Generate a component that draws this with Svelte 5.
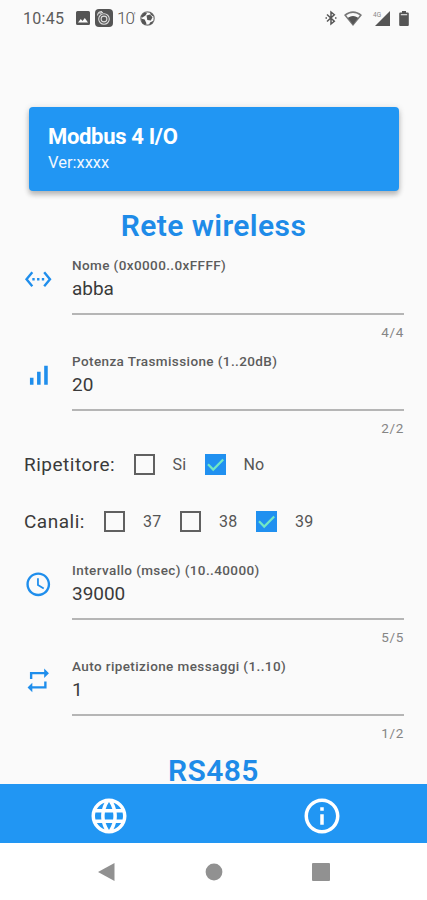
<script>
  const wireless = [
    { icon: 'ethernet', label: 'Nome (0x0000..0xFFFF)', value: 'abba', count: '4/4' },
    { icon: 'signal', label: 'Potenza Trasmissione (1..20dB)', value: '20', count: '2/2' }
  ];
  const timing = [
    { icon: 'clock', label: 'Intervallo (msec) (10..40000)', value: '39000', count: '5/5' },
    { icon: 'repeat', label: 'Auto ripetizione messaggi (1..10)', value: '1', count: '1/2' }
  ];
  const repeater = [
    { text: 'Si', on: false, w: 71 },
    { text: 'No', on: true, w: 71 }
  ];
  const channels = [
    { text: '37', on: false, w: 76 },
    { text: '38', on: false, w: 76 },
    { text: '39', on: true, w: 76 }
  ];
  const paths = {
    ethernet: 'M7.77 6.76 6.23 5.48.82 12l5.41 6.52 1.54-1.28L3.42 12l4.35-5.24zM7 13h2v-2H7v2zm10-2h-2v2h2v-2zm-6 2h2v-2h-2v2zm6.77-7.52-1.54 1.28L20.58 12l-4.35 5.24 1.54 1.28L23.18 12l-5.41-6.52z',
    signal: 'M17 4h3v16h-3zM5 14h3v6H5zm6-5h3v11h-3z',
    clock: 'M11.99 2C6.47 2 2 6.48 2 12s4.47 10 9.99 10C17.52 22 22 17.52 22 12S17.52 2 11.99 2zM12 20c-4.42 0-8-3.58-8-8s3.58-8 8-8 8 3.58 8 8-3.58 8-8 8zm.5-13H11v6l5.25 3.15.75-1.23-4.5-2.67z',
    repeat: 'M7 7h10v3l4-4-4-4v3H5v6h2V7zm10 10H7v-3l-4 4 4 4v-3h12v-6h-2v4z'
  };
</script>

{#snippet field(f)}
  <div class="field">
    <svg class="lead" viewBox="0 0 24 24"><path d={paths[f.icon]} /></svg>
    <div class="body">
      <div class="label">{f.label}</div>
      <div class="value">{f.value}</div>
      <div class="line"></div>
      <div class="count">{f.count}</div>
    </div>
  </div>
{/snippet}

{#snippet option(o)}
  <div class="option" style="width:{o.w}px">
    <span class="box" class:on={o.on}>
      {#if o.on}
        <svg viewBox="0 0 21 21"><path d="M3 10.3 8.2 15.6 18.2 5.4" /></svg>
      {/if}
    </span>
    <span class="otext">{o.text}</span>
  </div>
{/snippet}

<div class="screen">
  <header class="status">
    <span class="time">10:45</span>
    <svg class="s-img" viewBox="0 0 14 14"><path fill-rule="evenodd" d="M1.5 0h11A1.5 1.5 0 0 1 14 1.5v11a1.5 1.5 0 0 1-1.5 1.5h-11A1.5 1.5 0 0 1 0 12.5v-11A1.5 1.5 0 0 1 1.5 0zM2 11.5h10L8.8 7 6.5 10 4.8 8z" /></svg>
    <svg class="s-cam" viewBox="0 0 18 18">
      <rect width="18" height="18" rx="4" />
      <g fill="none" stroke="#ddd" stroke-width="1.1"><circle cx="9" cy="10" r="5.3" /><circle cx="9" cy="10" r="2.9" /><path d="M2.5 6.5Q3 2.5 7 2.5M4.5 4.5 8 3.3" /></g>
    </svg>
    <span class="ten">10<sup>′</sup></span>
    <svg class="s-ball" viewBox="0 0 15 15">
      <circle cx="7.5" cy="7.5" r="6.7" fill="none" stroke="#777" stroke-width="1.2" />
      <path d="M6.5 4.5 10 3.5l2.5 2.7L10.8 9.5 7.3 9zM1 5l3-3.3 3 .3L5.5 4.5 2 6.8zM10 1l3.5 3.2-.5 1-2.300-1.500zM1 7.500l3.700 1L6.500 12.500 5 14 2 12zM10 11.500l3.500-1.700-1.500 3-3 1.200z" />
    </svg>
    <span class="grow"></span>
    <svg class="s-bt" viewBox="0 0 12 16"><path d="M2 4.5 9.3 11.3 6 14V2l3.3 2.7L2 11.5M.5 8h1.5M10 8h1.500" fill="none" stroke="#555" stroke-width="1.5" /></svg>
    <svg class="s-wifi" viewBox="0 0 18 15"><path fill="#777" fill-rule="evenodd" d="M0 4Q9-3.5 18 4L9 15zM2.300 4.300 4.200 7Q9 4 13.800 7l1.900-2.700Q9-.3 2.300 4.300z" /><path d="M4 6.700Q9 3.300 14 6.700L9 13.500z" /></svg>
    <svg class="s-cell" viewBox="0 0 17 15"><path d="M17 0v15H2z" /><text x="0" y="5.5">4G</text></svg>
    <svg class="s-bat" viewBox="0 0 10 15"><path d="M3 0h4v1.5h1.8a1 1 0 0 1 1 1V14a1 1 0 0 1-1 1H1.2a1 1 0 0 1-1-1V2.5a1 1 0 0 1 1-1H3z" /><path d="M1.8 3h6.4v1.3H1.8z" fill="#d4d4d4" /></svg>
  </header>

  <main>
    <section class="card">
      <h1>Modbus 4 I/O</h1>
      <p>Ver:xxxx</p>
    </section>
    <h2 class="h-wireless">Rete wireless</h2>
    {#each wireless as f}{@render field(f)}{/each}
    <div class="row first">
      <span class="rlabel rip">Ripetitore:</span>
      {#each repeater as o}{@render option(o)}{/each}
    </div>
    <div class="row last">
      <span class="rlabel can">Canali:</span>
      {#each channels as o}{@render option(o)}{/each}
    </div>
    {#each timing as f}{@render field(f)}{/each}
    <h2 class="h-rs">RS485</h2>
  </main>

  <nav class="tabs">
    <div><svg viewBox="0 0 24 24"><path d="M11.99 2C6.47 2 2 6.48 2 12s4.47 10 9.99 10C17.52 22 22 17.52 22 12S17.52 2 11.99 2zm6.93 6h-2.95c-.32-1.25-.78-2.45-1.38-3.56 1.84.63 3.37 1.91 4.33 3.56zM12 4.04c.83 1.2 1.48 2.53 1.91 3.96h-3.82c.43-1.43 1.08-2.76 1.91-3.96zM4.26 14C4.1 13.36 4 12.69 4 12s.1-1.36.26-2h3.38c-.08.66-.14 1.32-.14 2s.06 1.34.14 2H4.26zm.82 2h2.95c.32 1.25.78 2.45 1.38 3.56-1.84-.63-3.37-1.9-4.33-3.56zm2.95-8H5.08c.96-1.66 2.49-2.93 4.33-3.56C8.81 5.55 8.35 6.75 8.03 8zM12 19.96c-.83-1.2-1.48-2.53-1.91-3.96h3.82c-.43 1.43-1.08 2.76-1.91 3.96zM14.34 14H9.66c-.09-.66-.16-1.32-.16-2s.07-1.35.16-2h4.68c.09.65.16 1.32.16 2s-.07 1.34-.16 2zm.25 5.56c.6-1.11 1.06-2.31 1.38-3.56h2.95c-.96 1.65-2.49 2.93-4.33 3.56zM16.36 14c.08-.66.14-1.32.14-2s-.06-1.34-.14-2h3.38c.16.64.26 1.31.26 2s-.1 1.36-.26 2h-3.38z" /></svg></div>
    <div><svg viewBox="0 0 24 24"><path d="M11 7h2v2h-2zm0 4h2v6h-2zm1-9C6.48 2 2 6.48 2 12s4.48 10 10 10 10-4.48 10-10S17.52 2 12 2zm0 18c-4.41 0-8-3.59-8-8s3.59-8 8-8 8 3.59 8 8-3.59 8-8 8z" /></svg></div>
  </nav>
  <footer class="sys">
    <svg viewBox="0 0 20 20"><path d="M17.5 1v18L1 10z" /></svg>
    <svg viewBox="0 0 20 20"><circle cx="10" cy="10" r="8.4" /></svg>
    <svg viewBox="0 0 20 20"><rect x="1" y="1" width="18" height="18" rx="1" /></svg>
  </footer>
</div>

<style>
  :global(body) { margin: 0; background: #fafafa; }
  .screen {
    width: 427px; height: 900px; overflow: hidden;
    display: flex; flex-direction: column;
    background: #fafafa; color: #333;
    font-family: Roboto, "Liberation Sans", sans-serif;
  }
  svg { display: block; flex: none; }
  h1, h2, p { margin: 0; }

  .status { height: 36px; flex: none; box-sizing: border-box; padding: 0 18px 0 23px; display: flex; align-items: center; fill: #555; }
  .time { font-size: 16px; letter-spacing: 0.3px; color: #5c5c5c; width: 53px; }
  .s-img { width: 14px; height: 14px; }
  .s-cam { width: 18px; height: 18px; margin-left: 5px; }
  .ten { font-size: 17px; font-weight: 300; color: #555; letter-spacing: -1px; margin-left: 4px; width: 23px; line-height: 18px; white-space: nowrap; }
  .ten sup { font-size: 11px; line-height: 0; vertical-align: 4px; }
  .s-ball { width: 15px; height: 15px; }
  .grow { flex: 1; }
  .s-bt { width: 12px; height: 16px; margin-right: 7px; }
  .s-wifi { width: 18px; height: 15px; margin-right: 11px; }
  .s-cell { width: 17px; height: 15px; margin-right: 9px; overflow: visible; }
  .s-cell text { font-size: 6.5px; fill: #888; }
  .s-bat { width: 10px; height: 15px; }

  main { height: 748px; flex: none; overflow: hidden; display: flex; flex-direction: column; }
  .card {
    flex: none; margin: 71px 28px 0 29px; height: 84px; box-sizing: border-box; padding: 17px 19px;
    background: #2196f3; color: #fff; border-radius: 4px;
    box-shadow: 0 4px 5px rgba(0, 0, 0, 0.2), 0 1px 7px rgba(0, 0, 0, 0.14);
  }
  .card h1 { font-size: 22px; font-weight: 700; line-height: 26px; letter-spacing: -0.32px; }
  .card p { font-size: 16.5px; line-height: 20px; margin-top: 3px; color: #f0f7fe; }
  h2 { flex: none; text-align: center; color: #1e8be8; font-weight: 600; font-size: 30px; line-height: 34px; letter-spacing: 0.4px; }
  .h-wireless { margin: 18px 0 10px; }
  .h-rs { margin-top: 6.5px; line-height: 27px; }

  .field { flex: none; height: 96px; display: flex; padding: 0 23px 0 24px; }
  .lead { width: 28.5px; height: 28.5px; margin: 11.5px 19.5px 0 0; fill: #1f8eec; }
  .body { flex: 1; display: flex; flex-direction: column; }
  .label { font-size: 13.5px; line-height: 16px; margin-top: 4px; color: #5c5c5c; font-weight: 500; white-space: nowrap; letter-spacing: 0.4px; }
  .value { font-size: 19px; line-height: 24px; margin-top: 4px; color: #3a3a3a; letter-spacing: -0.05px; }
  .line { height: 1.5px; background: #b5b5b5; margin-top: 12px; }
  .count { font-size: 13.5px; line-height: 16px; margin-top: 9px; text-align: right; letter-spacing: 0.7px; color: #858585; }

  .row { flex: none; height: 57px; display: flex; align-items: center; padding-left: 24px; }
  .row.first { margin-top: -9px; }
  .row.last { margin-bottom: 9px; height: 56px; }
  .rlabel { font-size: 19px; color: #3a3a3a; white-space: nowrap; letter-spacing: 0.5px; }
  .rip { width: 109.5px; }
  .can { width: 80px; }
  .option { display: flex; align-items: center; }
  .box { width: 21px; height: 21px; box-sizing: border-box; border: 2px solid #606060; flex: none; }
  .box.on { border: 0; background: #2090f0; }
  .box svg { width: 21px; height: 21px; fill: none; stroke: #72e8c4; stroke-width: 2.2; }
  .otext { margin-left: 18px; font-size: 16px; color: #555; letter-spacing: 0.2px; }

  .tabs { flex: none; height: 59px; box-sizing: border-box; padding-top: 11px; display: flex; background: #2196f3; }
  .tabs div { flex: 1; padding-left: 4px; display: flex; justify-content: center; align-items: flex-start; }
  .tabs svg { width: 42px; height: 42px; fill: #fff; }
  .sys { flex: 1; background: #fff; display: flex; align-items: center; justify-content: space-between; padding: 0 96.5px 0 97px; fill: #919191; }
  .sys svg { width: 20px; height: 20px; }
</style>
